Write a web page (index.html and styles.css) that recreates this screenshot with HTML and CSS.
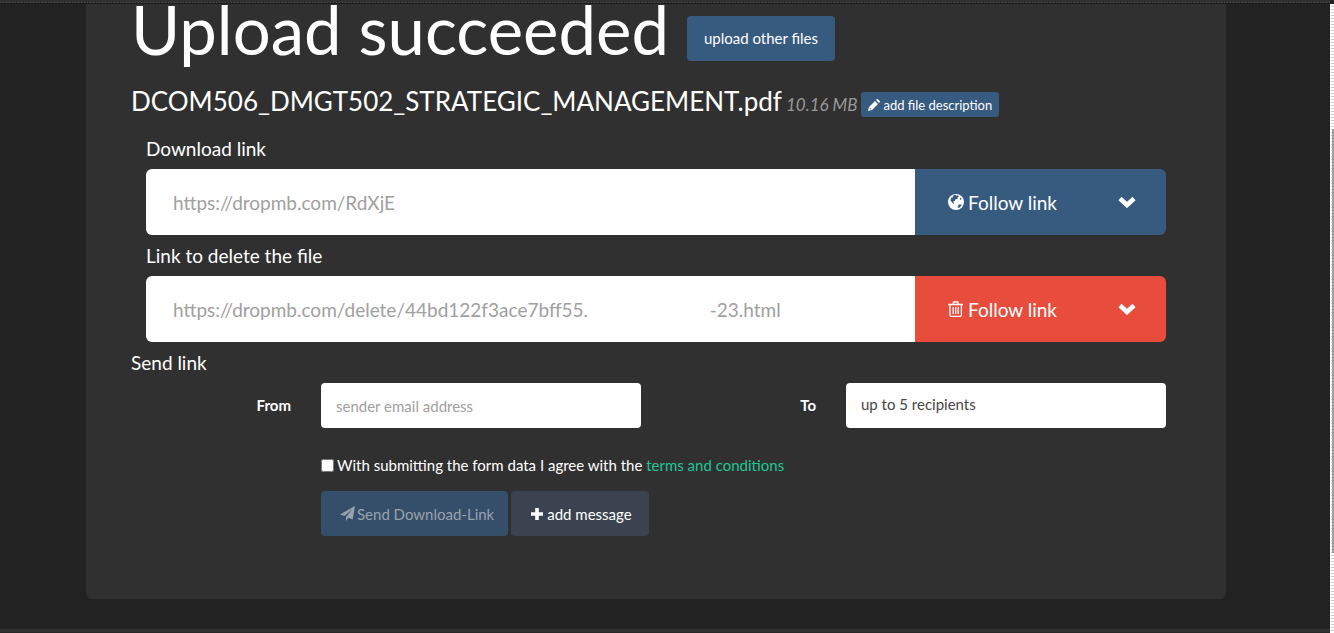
FILE: index.html
```html
<!DOCTYPE html>
<html lang="en">
<head>
<meta charset="utf-8">
<title>Upload succeeded</title>
<link rel="stylesheet" href="styles.css">
</head>
<body>
<div class="page">
  <div class="strip strip-top"></div>
  <main class="card">
    <header class="title-row">
      <h1 class="title">Upload succeeded</h1>
      <a class="btn btn-primary" href="#">upload other files</a>
    </header>
    <section class="file-row">
      <h2 class="file-name">DCOM506_DMGT502_STRATEGIC_MANAGEMENT.pdf</h2>
      <span class="file-size">10.16 MB</span>
      <button class="btn-small" type="button">
        <svg class="icon-pencil" viewBox="0 0 12 12"><path d="M0 12l1-4 6-6 3 3-6 6zM8 1l.7-.7q.6-.6 1.200 0l1.800 1.800q.6.6 0 1.200L11 4z" fill="currentColor"/><path d="M1.600 9l1.400 1.400" stroke="#375a7f"/></svg>
        add file description
      </button>
    </section>

    <section class="links">
      <label class="heading" for="download">Download link</label>
      <div class="link-group">
        <input class="link-input" id="download" type="text" readonly value="https://dropmb.com/RdXjE">
        <a class="follow blue" href="#">
          <svg class="icon-globe" viewBox="0 0 16 16"><circle cx="8" cy="8" r="8" fill="#fff"/><path d="M5.500 1.200l1.500-.4 1.500 1 1.500-.5 1 1.200-1.200.5-.3 1.700-2 .6-1 2-1.500.4 1 1.300-.5 1L4 8.200 2.500 6.500 3 4l1.500-.5zM11.500 5l1-1.200 1 .9-.7 1.300zM10 11l2-.8 1.700.8-1.700 2.200-2 .9-.5-1.300 1-.8z" fill="#375a7f"/></svg>
          Follow link
        </a>
        <button class="toggle blue" type="button" aria-label="More download options">
          <svg class="icon-chevron" viewBox="0 0 18 12"><path d="M2 2.500l7 6.500 7-6.500" fill="none" stroke="#fff" stroke-width="4.600"/></svg>
        </button>
      </div>
      <label class="heading" for="delete">Link to delete the file</label>
      <div class="link-group">
        <input class="link-input" id="delete" type="text" readonly value="https://dropmb.com/delete/44bd122f3ace7bff55.                         -23.html">
        <a class="follow red" href="#">
          <svg class="icon-globe" viewBox="0 0 16 16" fill="none" stroke="#fff" stroke-width="1.300"><path d="M.3 3.500h14.700M5 3.500L5.600 1h4.200l.6 2.500M2 3.500V14q0 1.300 1.300 1.300h8.800q1.300 0 1.300-1.300V3.500M5.200 6v7M7.700 6v7M10.200 6v7"/></svg>
          Follow link
        </a>
        <button class="toggle red" type="button" aria-label="More delete options">
          <svg class="icon-chevron" viewBox="0 0 18 12"><path d="M2 2.500l7 6.500 7-6.500" fill="none" stroke="#fff" stroke-width="4.600"/></svg>
        </button>
      </div>
    </section>

    <h3 class="heading">Send link</h3>
    <form class="send-form">
      <div class="fields">
        <div class="field">
          <label class="field-label" for="from">From</label>
          <input class="field-input" id="from" type="email" placeholder="sender email address">
        </div>
        <div class="field">
          <label class="field-label" for="to">To</label>
          <input class="field-input recipients" id="to" type="text" placeholder="up to 5 recipients">
        </div>
      </div>
      <div class="field agree-row">
        <div class="agree">
          <input class="check" id="agree" type="checkbox">
          <label for="agree">With submitting the form data I agree with the <a class="terms" href="#">terms and conditions</a></label>
        </div>
      </div>
      <div class="field actions-row">
        <div class="actions">
          <button class="btn btn-send" type="submit" disabled>
            <svg class="icon-plane" viewBox="0 0 15 15"><path d="M15 0l-2.300 13.600-4.400-1.800L6 15v-4l6.500-8L4.500 10 0 8.500z" fill="currentColor"/></svg>Send Download-Link
          </button>
          <button class="btn btn-message" type="button">
            <svg class="icon-plus" viewBox="0 0 12 12"><path d="M4.200 0h3.600v4.200H12v3.600H7.800V12H4.200V7.800H0V4.200h4.200z" fill="#fff"/></svg>
            add message
          </button>
        </div>
      </div>
    </form>
  </main>
  <div class="strip strip-bottom"></div>
</div>
<div class="scroll-track"><div class="scroll-thumb"></div></div>
</body>
</html>
```
FILE: styles.css
```css
* { box-sizing: border-box; }

body {
  margin: 0;
  background: #222;
  color: #fff;
  font: 15px/21px Lato, sans-serif;
  overflow: hidden;
}

a { color: inherit; text-decoration: none; }

input, button { font-family: inherit; }

.page {
  display: flex;
  flex-direction: column;
  min-height: 100vh;
  padding-right: 4px;
}

.strip { background: #303030; }

.strip-top {
  height: 4px;
  border-bottom: 1px solid #1c1c1c;
  border-top: 2px solid #303030;
  background: repeating-linear-gradient(90deg, #505050 0 1px, #303030 1px 3px);
}

.strip-bottom {
  height: 4px;
  margin-top: auto;
  border-bottom: 1px solid #262626;
}

.card {
  width: calc(100% - 190px);
  max-width: 1140px;
  margin: 0 auto 0 86px;
  padding: 0 45px 63px;
  background: #303030;
  border-radius: 0 0 6px 6px;
}

.title-row {
  display: flex;
  align-items: flex-start;
  gap: 18px;
}

.title {
  margin: 0;
  font-size: 67px;
  font-weight: 400;
  line-height: 50px;
}

.btn {
  display: flex;
  align-items: center;
  height: 45px;
  padding: 0 17px;
  border: 0;
  border-radius: 4px;
  font-size: 15px;
  color: #fff;
}

.btn-primary { margin-top: 12px; background: #375a7f; }

.file-row {
  display: flex;
  align-items: flex-end;
  gap: 4px;
  margin-top: 25px;
}

.file-name {
  margin: 0;
  font-size: 26px;
  font-weight: 400;
  line-height: 31px;
}

.file-size {
  font-size: 17px;
  line-height: 25px;
  font-style: italic;
  color: #999;
}

.btn-small {
  display: flex;
  align-items: center;
  gap: 3px;
  height: 25px;
  padding: 0 7px;
  border: 0;
  border-radius: 3px;
  background: #375a7f;
  color: #fff;
  font-size: 13px;
}

.icon-pencil { width: 12px; height: 12px; }

.links {
  display: flex;
  flex-direction: column;
  margin-top: 11px;
  padding: 0 15px;
}

.heading {
  margin: 0;
  font-size: 19px;
  font-weight: 400;
  line-height: 41px;
}

.link-group {
  display: flex;
  height: 66px;
  border-radius: 6px;
  overflow: hidden;
}

.link-input {
  flex: 1;
  min-width: 0;
  padding: 0 27px;
  border: 0;
  background: #fff;
  color: #a0a0a0;
  font-size: 19px;
}

.follow {
  display: flex;
  align-items: center;
  gap: 4px;
  width: 173px;
  padding-left: 33px;
  font-size: 19px;
}

.toggle {
  width: 78px;
  padding: 2px 0 0;
  border: 0;
}

.blue { background: #375a7f; }
.red { background: #e74c3c; }

.icon-globe { width: 16px; height: 16px; }
.icon-chevron { width: 18px; height: 12px; }

.send-form { padding: 0 15px; }

.fields {
  display: grid;
  grid-template-columns: 1fr 1fr;
  gap: 30px;
}

.field {
  display: grid;
  grid-template-columns: minmax(0, 145fr) minmax(0, 320fr);
  gap: 30px;
  align-items: center;
}

.field-label {
  text-align: right;
  font-weight: 700;
}

.field-input {
  width: 100%;
  height: 45px;
  padding: 0 15px;
  border: 0;
  border-radius: 4px;
  background: #fff;
  color: #464545;
  font-size: 15px;
}

.field-input::placeholder { color: #a0a0a0; }
.recipients { padding-bottom: 3px; }
.recipients::placeholder { color: #464545; }

.agree-row, .actions-row { width: calc(50% - 15px); }
.agree-row { margin-top: 27px; }
.actions-row { margin-top: 15px; }

.agree, .actions {
  grid-column: 2;
  display: flex;
  align-items: center;
  gap: 3px;
  white-space: nowrap;
}

.check {
  width: 13px;
  height: 13px;
  margin: 0;
}

.terms { color: #1fc796; }

.btn-send {
  padding: 0 14px 0 19px;
  background: #354e69;
  color: #98a2ad;
}

.btn-message {
  gap: 4px;
  padding: 0 17px 0 20px;
  background: #3b4350;
}

.icon-plane { width: 15px; height: 15px; margin-right: 2px; }
.icon-plus { width: 12px; height: 12px; }

.scroll-track {
  position: fixed;
  top: 4px;
  right: 0;
  bottom: 0;
  width: 4px;
  padding: 125px 0 80px 1px;
  background: repeating-linear-gradient(#fff 0 2px, #ccc 2px 3px);
  border-left: 1px solid #fff;
}

.scroll-thumb {
  height: 100%;
  background: #a0a0a0;
}
```
